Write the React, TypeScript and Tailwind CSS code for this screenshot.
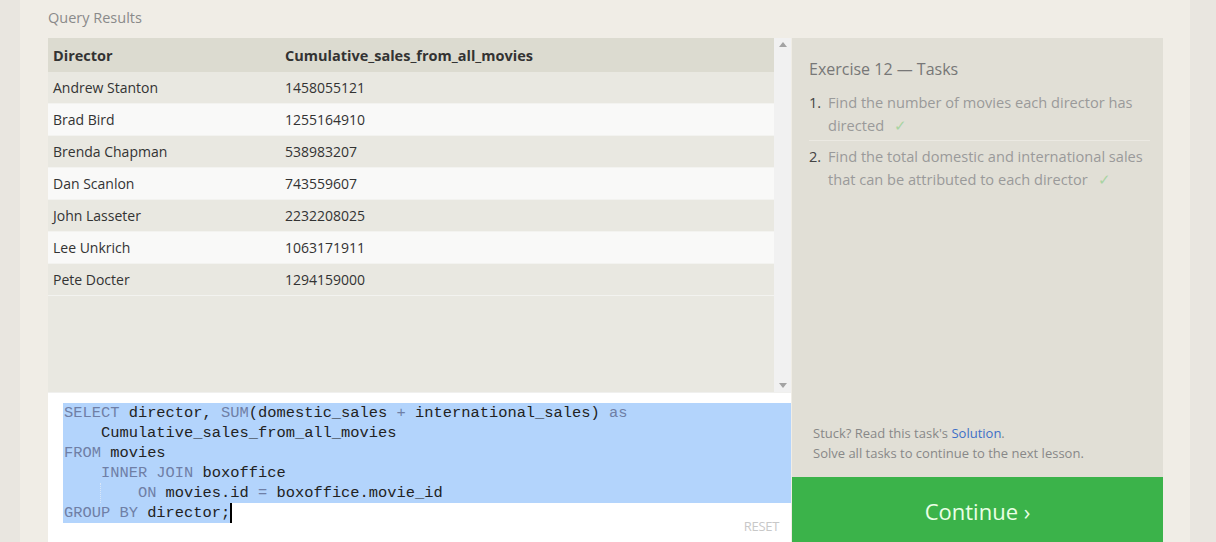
const rows: [string, string][] = [
  ['Andrew Stanton', '1458055121'],
  ['Brad Bird', '1255164910'],
  ['Brenda Chapman', '538983207'],
  ['Dan Scanlon', '743559607'],
  ['John Lasseter', '2232208025'],
  ['Lee Unkrich', '1063171911'],
  ['Pete Docter', '1294159000'],
];

const kw = 'text-[#6f7fa6]';

function Scrollbar() {
  return (
    <div className="w-[17px] h-full bg-[#f1f1f1] flex flex-col items-center justify-between py-[4px]">
      <svg width="8" height="5" viewBox="0 0 8 5">
        <path d="M0 5 L4 0 L8 5 Z" fill="#a3a3a3" />
      </svg>
      <svg width="8" height="5" viewBox="0 0 8 5">
        <path d="M0 0 L4 5 L8 0 Z" fill="#a3a3a3" />
      </svg>
    </div>
  );
}

function ResultsTable() {
  return (
    <div className="flex h-[355px]">
      <div className="w-[726px] h-full bg-[#e9e8e1]">
        <div className="flex h-[34px] items-center pt-[1px] bg-[#dcdbd0] font-bold text-[#333] text-[14.5px]">
          <div className="w-[232px] pl-[5px]">Director</div>
          <div className="pl-[5px]">Cumulative_sales_from_all_movies</div>
        </div>
        {rows.map(([name, total], i) => (
          <div
            key={name}
            className={`flex h-[32px] items-center text-[14px] text-[#333] border-b border-[#f3f3f0] ${
              i % 2 === 1 ? 'bg-[#f9f9f8]' : 'bg-[#e9e8e1]'
            }`}
          >
            <div className="w-[232px] pl-[5px]">{name}</div>
            <div className="pl-[5px]">{total}</div>
          </div>
        ))}
      </div>
      <Scrollbar />
    </div>
  );
}

function Editor() {
  const sel = 'bg-[#b3d4fc]';
  return (
    <div className="relative h-[149px] bg-white pt-[10px] pl-[15px] font-['Liberation_Mono',monospace] text-[15.4px] leading-[20px] text-[#222] whitespace-pre">
      <div className={`${sel} pl-[1px]`}>
        <span className={kw}>SELECT</span> director, <span className={kw}>SUM</span>(domestic_sales{' '}
        <span className={kw}>+</span> international_sales) <span className={kw}>as</span>
      </div>
      <div className={`${sel} pl-[1px]`}>    Cumulative_sales_from_all_movies</div>
      <div className={`${sel} pl-[1px]`}>
        <span className={kw}>FROM</span> movies
      </div>
      <div className={`${sel} pl-[1px]`}>
        {'    '}
        <span className={kw}>INNER JOIN</span> boxoffice
      </div>
      <div className={`${sel} pl-[1px] relative`}>
        <span className="absolute left-[37px] top-0 h-[20px] border-l border-dotted border-[#d8e6f8]" />
        {'        '}
        <span className={kw}>ON</span> movies.id <span className={kw}>=</span> boxoffice.movie_id
      </div>
      <div className="flex">
        <span className={`${sel} pl-[1px]`}>
          <span className={kw}>GROUP BY</span> director;
        </span>
        <span className="w-[2px] h-[20px] bg-black" />
      </div>
      <div className="absolute right-[12px] bottom-[6px] font-['Open_Sans',sans-serif] text-[13px] text-[#c8c8c8] tracking-tight">
        RESET
      </div>
    </div>
  );
}

function TaskPanel() {
  const check = <span className="ml-[10px] text-[#a8d4a2]">✓</span>;
  return (
    <div className="flex flex-col h-full">
      <div className="h-[439px] bg-[#e1dfd6] flex flex-col justify-between pt-[20px] pb-[14px] pl-[17px] pr-[6px]">
        <div>
          <div className="text-[16px] text-[#777] leading-[22px]">Exercise 12 — Tasks</div>
          <ol className="mt-[11px] text-[14.6px] leading-[23px]">
            <li className="flex pb-[3px] border-b border-[#ebe9e2] mr-[7px]">
              <span className="w-[19px] text-[#444]">1.</span>
              <span className="flex-1 text-[#9a9a9a]">
                Find the number of movies each director has directed
                {check}
              </span>
            </li>
            <li className="flex pt-[4px]">
              <span className="w-[19px] text-[#444]">2.</span>
              <span className="flex-1 text-[#9a9a9a]">
                Find the total domestic and international sales that can be attributed to each director
                {check}
              </span>
            </li>
          </ol>
        </div>
        <div className="pl-[4px] text-[13px] leading-[20px] text-[#888]">
          <div>
            Stuck? Read this task's <span className="text-[#3e6fc7]">Solution</span>.
          </div>
          <div>Solve all tasks to continue to the next lesson.</div>
        </div>
      </div>
      <div className="h-[65px] bg-[#3bb34a] flex items-center justify-center pt-[4px] text-[22px] text-[#eaffe6]">
        Continue ›
      </div>
    </div>
  );
}

export default function App() {
  return (
    <div className="flex w-[1216px] h-[542px] overflow-hidden bg-[#e9e6e0] font-['Open_Sans',sans-serif]">
      <div className="w-[20px] shrink-0" />
      <div className="w-[1170px] shrink-0 bg-[#f0ede6] pl-[28px] pr-[27px]">
        <div className="h-[38px] pt-[7px] text-[14.5px] text-[#8a8a8a]">Query Results</div>
        <div className="flex gap-[1px] h-[504px]">
          <div className="w-[743px] flex flex-col">
            <ResultsTable />
            <div className="h-[1px] bg-[#f0f0ee]" />
            <Editor />
          </div>
          <div className="w-[371px]">
            <TaskPanel />
          </div>
        </div>
      </div>
    </div>
  );
}
